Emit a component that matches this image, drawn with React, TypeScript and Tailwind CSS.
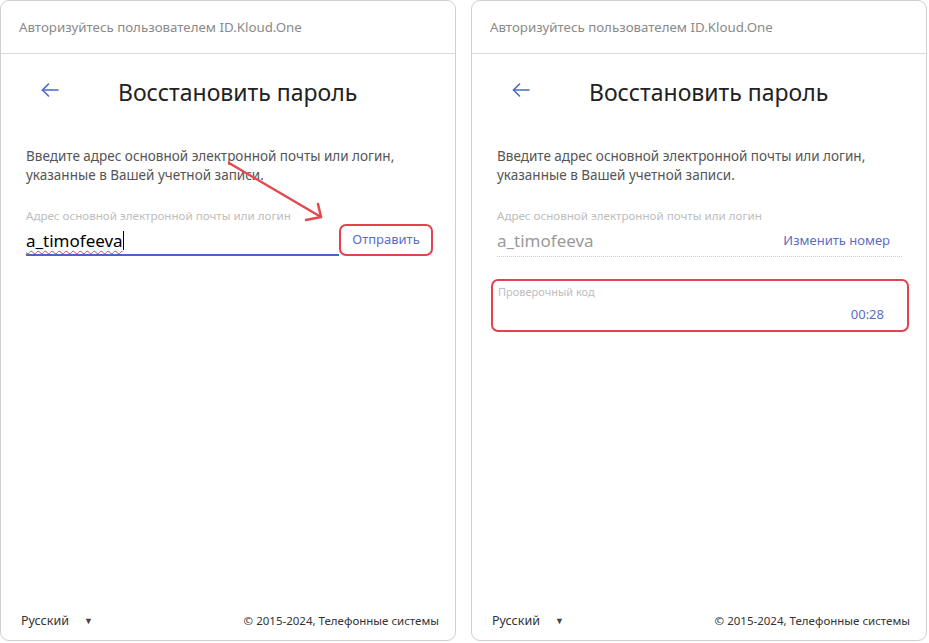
const FONT = { fontFamily: '"Noto Sans", "Open Sans", sans-serif' };

function BackArrow() {
  return (
    <svg width="18" height="14" viewBox="0 0 18 14" fill="none" stroke="#4b68c9" strokeWidth="1.6" strokeLinecap="round" strokeLinejoin="round">
      <path d="M17 7H1.5" />
      <path d="M7.5 1L1.5 7l6 6" />
    </svg>
  );
}

function Header() {
  return (
    <div className="h-[53px] flex items-center px-[18px] pt-[2px] border-b border-[#dadada] text-[13.3px] text-[#8a8a8a]">
      Авторизуйтесь пользователем ID.Kloud.One
    </div>
  );
}

function TitleRow() {
  return (
    <div className="flex items-center pt-[20px] pl-[40px]">
      <div className="w-[18px] h-[36px] flex items-center -mt-[4px]">
        <BackArrow />
      </div>
      <div className="ml-[59px] text-[23px] leading-[36px] text-[#222]">Восстановить пароль</div>
    </div>
  );
}

function Description() {
  return (
    <div className="mt-[37px] px-[25px] text-[13.5px] leading-[19px] text-[#555]">
      Введите адрес основной электронной почты или логин,
      <br />
      указанные в Вашей учетной записи.
    </div>
  );
}

function Footer() {
  return (
    <div className="mt-auto h-[42px] mb-[-2px] flex items-center justify-between pl-[20px] pr-[16px] text-[#333]">
      <div className="flex items-center text-[12.5px]">
        <span>Русский</span>
        <span className="ml-[15px] text-[9px] text-[#444]">▼</span>
      </div>
      <span className="text-[11.5px]">© 2015-2024, Телефонные системы</span>
    </div>
  );
}

function LeftPanel() {
  return (
    <div className="relative w-[456px] h-[641px] border border-[#cfcfcf] rounded-[9px] flex flex-col bg-white">
      <Header />
      <TitleRow />
      <Description />
      <div className="mt-[23px] pl-[25px] pr-[22px]">
        <div className="text-[11.6px] leading-[16px] text-[#bdbdbd]">Адрес основной электронной почты или логин</div>
        <div className="flex items-stretch h-[32px]">
          <div className="flex-1 flex items-center border-b-2 border-[#4a63c7] text-[17px] text-black pt-[3px]">
            <span className="underline decoration-wavy decoration-[#e04040] decoration-1 underline-offset-[3px]">a_timofeeva</span>
            <span className="w-px h-[19px] bg-black"></span>
          </div>
          <div className="w-[94px] flex items-center justify-center border-[2.5px] border-[#e3434f] rounded-[7px] text-[13px] text-[#5b6ec4]">
            Отправить
          </div>
        </div>
      </div>
      <Footer />
      <svg className="absolute left-0 top-0 pointer-events-none" width="456" height="641" fill="none" stroke="#e5484f" strokeWidth="2.5" strokeLinecap="round" strokeLinejoin="round">
        <path d="M228 162L320 216" />
        <path d="M317 203L320 216L305 219" />
      </svg>
    </div>
  );
}

function RightPanel() {
  return (
    <div className="w-[456px] h-[641px] border border-[#cfcfcf] rounded-[9px] flex flex-col bg-white">
      <Header />
      <TitleRow />
      <Description />
      <div className="mt-[23px] pl-[25px] pr-[24px]">
        <div className="text-[11.6px] leading-[16px] text-[#bdbdbd]">Адрес основной электронной почты или логин</div>
        <div className="h-[33px] pt-px flex items-center justify-between border-b border-dotted border-[#cfcfcf] pr-[12px]">
          <span className="text-[17px] text-[#9a9a9a]">a_timofeeva</span>
          <span className="text-[13px] text-[#5b6ec4]">Изменить номер</span>
        </div>
      </div>
      <div className="mt-[22px] ml-[19px] w-[418px] h-[53px] border-[2.5px] border-[#e3434f] rounded-[7px] flex flex-col pl-[5px] pr-[23px]">
        <div className="mt-[4px] text-[11px] leading-[14px] text-[#bdbdbd]">Проверочный код</div>
        <div className="mt-[6px] text-right text-[13px] leading-[18px] text-[#5b6ec4]">00:28</div>
      </div>
      <Footer />
    </div>
  );
}

export default function App() {
  return (
    <div className="w-[929px] h-[643px] bg-white flex gap-[15px]" style={FONT}>
      <LeftPanel />
      <RightPanel />
    </div>
  );
}
